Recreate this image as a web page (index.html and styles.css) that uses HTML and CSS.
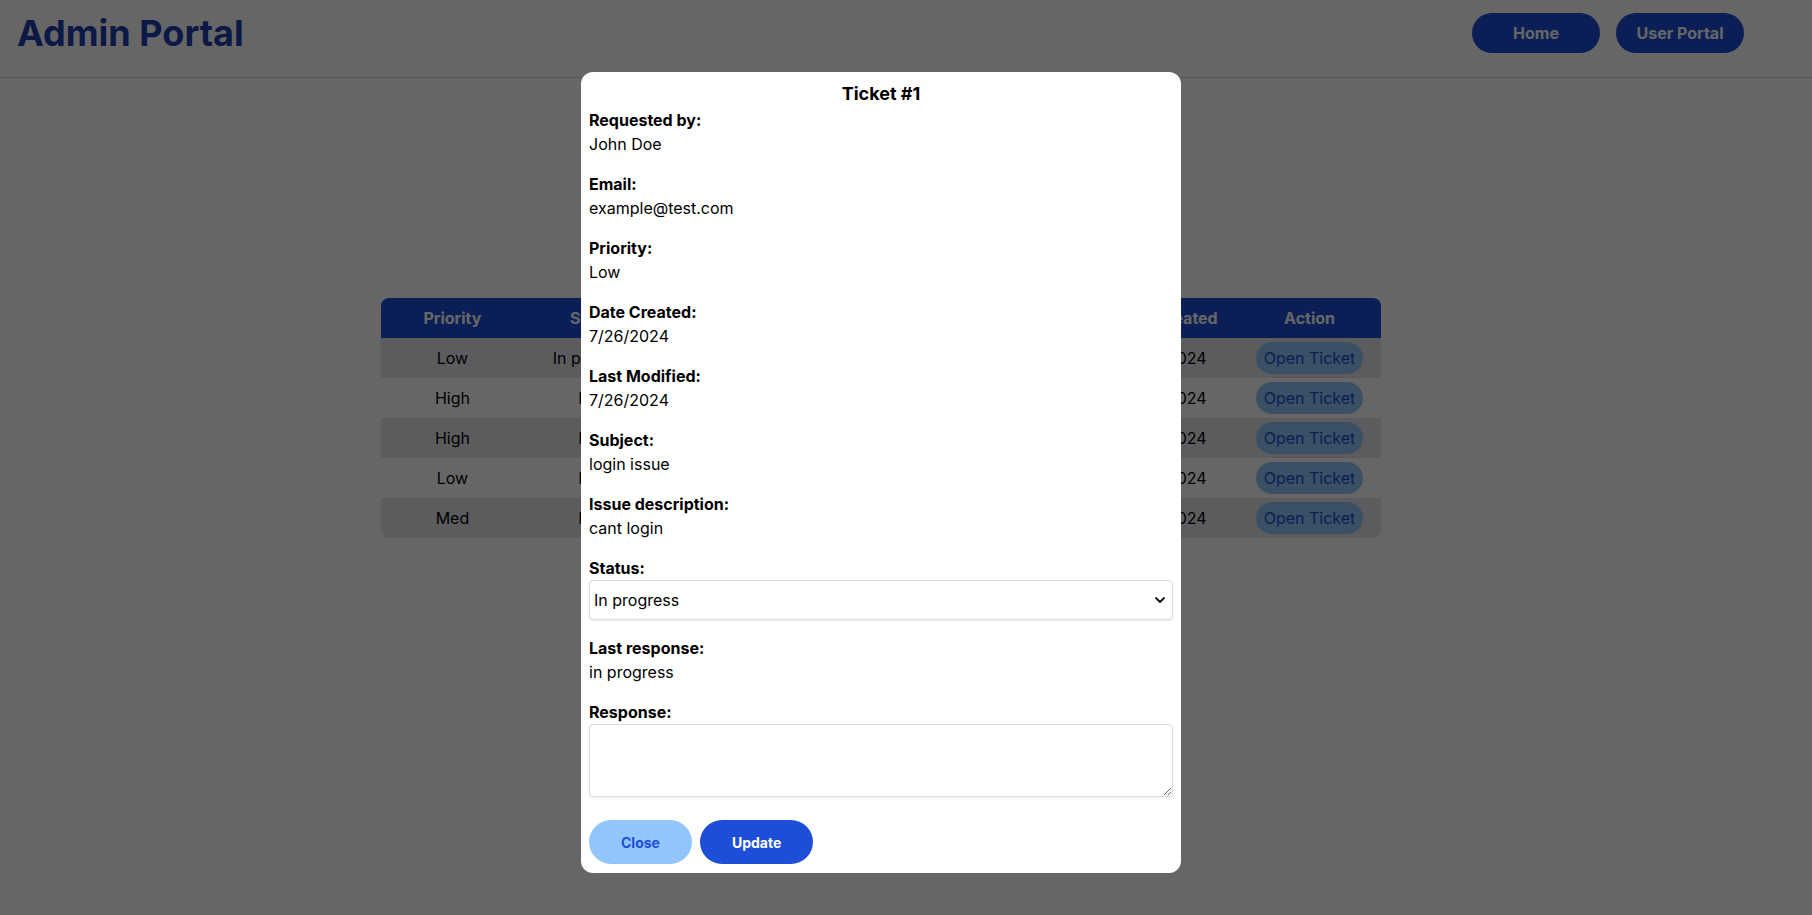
FILE: index.html
```html
<!DOCTYPE html>
<html lang="en">
<head>
<meta charset="utf-8">
<title>Admin Portal</title>
<link rel="stylesheet" href="styles.css">
</head>
<body>
<header class="topbar">
  <h1 class="brand">Admin Portal</h1>
  <nav class="nav">
    <button class="nav-btn">Home</button>
    <button class="nav-btn">User Portal</button>
  </nav>
</header>
<main class="main">
  <div class="table-wrap">
    <table class="tickets">
      <thead>
        <tr><th>Priority</th><th>Status</th><th>Subject</th><th>Name</th><th>Updated</th><th>Date Created</th><th>Action</th></tr>
      </thead>
      <tbody>
        <tr><td>Low</td><td>In progress</td><td>login issue</td><td>John Doe</td><td>7/26/2024</td><td>7/26/2024</td><td><button class="open-btn">Open Ticket</button></td></tr>
        <tr><td>High</td><td>New</td><td>reset</td><td>Jane Doe</td><td>7/26/2024</td><td>7/26/2024</td><td><button class="open-btn">Open Ticket</button></td></tr>
        <tr><td>High</td><td>New</td><td>printer</td><td>John Doe</td><td>7/26/2024</td><td>7/26/2024</td><td><button class="open-btn">Open Ticket</button></td></tr>
        <tr><td>Low</td><td>New</td><td>email</td><td>Jane Doe</td><td>7/26/2024</td><td>7/26/2024</td><td><button class="open-btn">Open Ticket</button></td></tr>
        <tr><td>Med</td><td>New</td><td>access</td><td>John Doe</td><td>7/26/2024</td><td>7/26/2024</td><td><button class="open-btn">Open Ticket</button></td></tr>
      </tbody>
    </table>
  </div>
</main>
<div class="overlay">
  <div class="modal">
    <h2 class="modal-title">Ticket #1</h2>
    <div class="field"><div class="label">Requested by:</div><div class="value">John Doe</div></div>
    <div class="field"><div class="label">Email:</div><div class="value">example@test.com</div></div>
    <div class="field"><div class="label">Priority:</div><div class="value">Low</div></div>
    <div class="field"><div class="label">Date Created:</div><div class="value">7/26/2024</div></div>
    <div class="field"><div class="label">Last Modified:</div><div class="value">7/26/2024</div></div>
    <div class="field"><div class="label">Subject:</div><div class="value">login issue</div></div>
    <div class="field"><div class="label">Issue description:</div><div class="value">cant login</div></div>
    <div class="field">
      <div class="label">Status:</div>
      <div class="select-wrap">
        <select class="select">
          <option>New</option>
          <option selected>In progress</option>
          <option>Closed</option>
        </select>
        <svg class="chev" width="10" height="6" viewBox="0 0 10 6"><path d="M1 1l4 4 4-4" fill="none" stroke="#111" stroke-width="1.8" stroke-linecap="round" stroke-linejoin="round"/></svg>
      </div>
    </div>
    <div class="field"><div class="label">Last response:</div><div class="value">in progress</div></div>
    <div class="field field-last">
      <div class="label">Response:</div>
      <textarea class="textarea"></textarea>
    </div>
    <div class="actions">
      <button class="btn btn-close">Close</button>
      <button class="btn btn-update">Update</button>
    </div>
  </div>
</div>
</body>
</html>
```
FILE: styles.css
```css
* { box-sizing: border-box; }
html, body { margin: 0; padding: 0; }
body {
  font-family: Inter, "Noto Sans", sans-serif;
  background: #ffffff;
  color: #000;
  width: 1812px;
  height: 915px;
  overflow: hidden;
}
.topbar {
  display: flex;
  align-items: center;
  justify-content: space-between;
  padding: 13px 68px 24px 17px;
  border-bottom: 1px solid #d1d5db;
  height: 78px;
}
.brand {
  margin: 0;
  font-size: 36px;
  line-height: 40px;
  font-weight: 700;
  color: #1e40af;
}
.nav { display: flex; gap: 16px; }
.nav-btn {
  width: 128px;
  height: 40px;
  border: none;
  border-radius: 9999px;
  background: #1d4ed8;
  color: #fff;
  font-family: Inter, sans-serif;
  font-size: 16px;
  font-weight: 700;
}
.main {
  display: flex;
  justify-content: center;
  padding: 220px 50px 0 0;
}
.table-wrap {
  width: 1000px;
  border-radius: 8px;
  overflow: hidden;
}
.tickets {
  width: 100%;
  table-layout: fixed;
  border-collapse: collapse;
  font-size: 16px;
}
.tickets th {
  background: #1d4ed8;
  color: #fff;
  font-weight: 700;
  height: 40px;
  padding: 0;
  text-align: center;
}
.tickets td {
  height: 40px;
  padding: 0;
  text-align: center;
}
.tickets tbody tr:nth-child(odd) td { background: #e5e7eb; }
.tickets tbody tr:nth-child(even) td { background: #ffffff; }
.open-btn {
  height: 32px;
  padding: 0 8px;
  border: none;
  border-radius: 9999px;
  background: #93c5fd;
  color: #1d4ed8;
  font-family: Inter, sans-serif;
  font-size: 16px;
  font-weight: 400;
}
.overlay {
  position: fixed;
  inset: 0;
  background: rgba(0, 0, 0, 0.6);
  display: flex;
  justify-content: center;
  align-items: flex-start;
  padding: 72px 50px 0 0;
}
.modal {
  width: 600px;
  height: 801px;
  background: #fff;
  border-radius: 12px;
  padding: 8px;
}
.modal-title {
  margin: 0;
  text-align: center;
  font-size: 18px;
  line-height: 28px;
  font-weight: 700;
}
.field { margin-bottom: 16px; }
.field-last { margin-bottom: 23px; }
.label {
  font-size: 16px;
  line-height: 24px;
  font-weight: 700;
}
.value {
  font-size: 16px;
  line-height: 24px;
}
.select-wrap { position: relative; }
.select {
  display: block;
  width: 100%;
  height: 40px;
  -webkit-appearance: none;
  appearance: none;
  border: 1px solid #dcdde3;
  border-radius: 4px;
  background: #fff;
  padding: 0 4px;
  font-family: Inter, sans-serif;
  font-size: 16px;
  color: #000;
  box-shadow: 0 1px 2px rgba(0, 0, 0, 0.08);
}
.chev {
  position: absolute;
  right: 8px;
  top: 17px;
}
.textarea {
  display: block;
  width: 100%;
  height: 73px;
  border: 1px solid #dcdde3;
  border-radius: 4px;
  box-shadow: 0 1px 2px rgba(0, 0, 0, 0.08);
  font-family: Inter, sans-serif;
  font-size: 16px;
  resize: vertical;
}
.actions { display: flex; gap: 8px; }
.btn {
  height: 44px;
  padding: 0 32px;
  border: none;
  border-radius: 9999px;
  font-family: Inter, sans-serif;
  font-size: 14px;
  font-weight: 700;
}
.btn-close { background: #93c5fd; color: #1d4ed8; }
.btn-update { background: #1d4ed8; color: #fff; }
```
